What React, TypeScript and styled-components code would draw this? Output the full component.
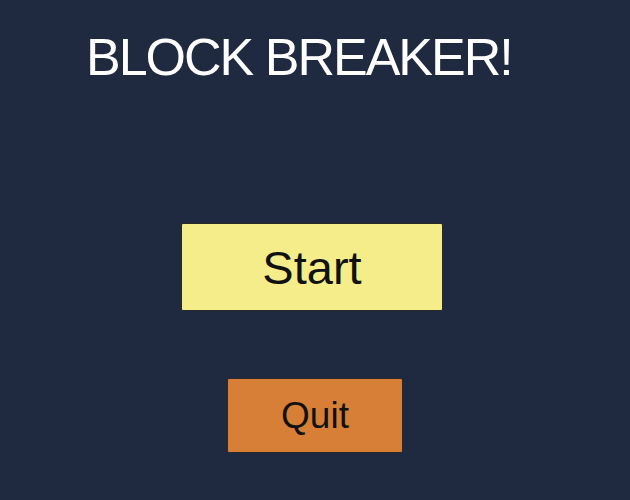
import styled, { createGlobalStyle } from "styled-components";

const GlobalStyle = createGlobalStyle`
  html, body {
    margin: 0;
    padding: 0;
    background: #1f2a40;
  }
`;

function App() {
  return (
    <>
      <GlobalStyle />
      <Screen>
        <Title>BLOCK BREAKER!</Title>
        <Menu>
          <MenuButton $variant="start">Start</MenuButton>
          <MenuButton $variant="quit">Quit</MenuButton>
        </Menu>
      </Screen>
    </>
  );
}

export default App;

const Screen = styled.div`
  width: 630px;
  height: 500px;
  box-sizing: border-box;
  padding-top: 31px;
  background: #1f2a40;
  display: flex;
  flex-direction: column;
  font-family: "Liberation Sans", Arial, sans-serif;
  overflow: hidden;
`;

const Title = styled.h1`
  margin: 0;
  padding-left: 86px;
  color: #ffffff;
  font-size: 52px;
  font-weight: normal;
  line-height: 52px;
  letter-spacing: -2px;
  white-space: nowrap;
`;

const Menu = styled.div`
  margin-top: 140px;
  display: flex;
  flex-direction: column;
  align-items: center;
  gap: 67px;
`;

const sizes = {
  start: { width: 262, height: 88, font: 47, bg: "#f4ed8a", shift: -3 },
  quit: { width: 176, height: 75, font: 37, bg: "#d87f37", shift: 0 },
};

const MenuButton = styled.button<{ $variant: "start" | "quit" }>`
  box-sizing: border-box;
  width: ${(p) => sizes[p.$variant].width}px;
  height: ${(p) => sizes[p.$variant].height}px;
  margin-left: ${(p) => sizes[p.$variant].shift * 2}px;
  padding: 0;
  border: 1px solid #2a2a2a;
  border-radius: 2px;
  background: ${(p) => sizes[p.$variant].bg};
  color: #111111;
  font-family: "Liberation Sans", Arial, sans-serif;
  font-size: ${(p) => sizes[p.$variant].font}px;
  display: flex;
  align-items: center;
  justify-content: center;
  cursor: pointer;
`;
